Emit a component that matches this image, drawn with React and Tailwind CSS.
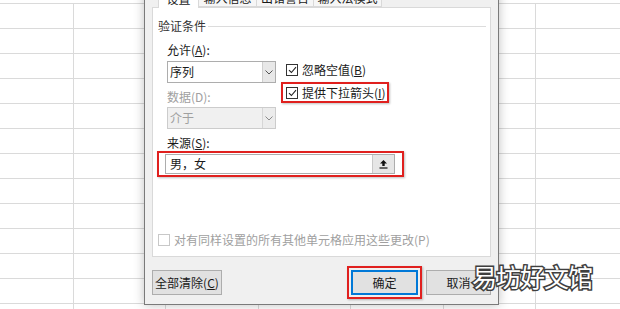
import React from 'react';

const colWidths = [74, 92, 93, 92, 93, 92];
const rows = Array.from({ length: 13 });

function Check({ on = true, disabled = false }) {
  return (
    <span
      className={`flex h-[12px] w-[12px] shrink-0 items-center justify-center border ${
        disabled ? 'border-[#c8c8c8] bg-white' : 'border-[#333] bg-white'
      }`}
    >
      {on && (
        <svg width="9" height="8" viewBox="0 0 9 8">
          <path d="M1 4.2 L3.4 6.5 L8 1.2" fill="none" stroke="#222" strokeWidth="1.1" />
        </svg>
      )}
    </span>
  );
}

function Chevron({ color = '#555' }) {
  return (
    <svg width="8" height="5" viewBox="0 0 8 5">
      <path d="M0.5 0.5 L4 4 L7.5 0.5" fill="none" stroke={color} strokeWidth="1" />
    </svg>
  );
}

function Select({ value, disabled = false }) {
  return (
    <div
      className={`flex h-[22px] w-[109px] items-stretch border ${
        disabled ? 'border-[#cccccc] bg-[#f0f0f0]' : 'border-[#adadad] bg-white'
      }`}
    >
      <span className={`flex-1 pl-[2px] leading-[20px] ${disabled ? 'text-[#a0a0a0]' : 'text-[#1a1a1a]'}`}>
        {value}
      </span>
      <span
        className={`flex w-[13px] items-center justify-center border-l ${
          disabled ? 'border-[#d6d6d6] bg-[#ececec]' : 'border-[#cfcfcf] bg-[#e8e8e8]'
        }`}
      >
        <Chevron color={disabled ? '#8a8a8a' : '#555'} />
      </span>
    </div>
  );
}

export default function App() {
  return (
    <div className="relative h-[309px] w-[620px] overflow-hidden bg-white font-['Microsoft_YaHei','Noto_Sans_CJK_SC',sans-serif] text-[12px] leading-[16px] text-[#1a1a1a]">
      {/* spreadsheet behind */}
      <div className="flex flex-col">
        <div className="h-[4px] border-b border-[#dadada]" />
        {rows.map((_, r) => (
          <div key={r} className="flex h-[25px]">
            {colWidths.map((w, c) => (
              <div key={c} style={{ width: w }} className="shrink-0 border-r border-b border-[#dadada]" />
            ))}
            <div className="flex-1 border-b border-[#dadada]" />
          </div>
        ))}
      </div>

      {/* dialog */}
      <div className="absolute left-[144px] top-[-20px] flex h-[325px] w-[355px] flex-col border border-[#7a7a7a] bg-[#f0f0f0] px-[7px] pt-[7px] shadow-[0_0_10px_rgba(0,0,0,0.25)]">
        {/* tabs */}
        <div className="relative z-10 flex h-[19px] pl-[6px]">
          <div className="-mb-px flex w-[41px] items-center justify-center border border-b-0 border-[#d9d9d9] bg-white pt-[1px]">
            设置
          </div>
          <div className="flex w-[58px] items-center justify-center border border-l-0 border-[#d9d9d9] bg-[#f6f6f6]">
            输入信息
          </div>
          <div className="flex w-[57px] items-center justify-center border border-l-0 border-[#d9d9d9] bg-[#f6f6f6]">
            出错警告
          </div>
          <div className="flex w-[68px] items-center justify-center border border-l-0 border-[#d9d9d9] bg-[#f6f6f6]">
            输入法模式
          </div>
        </div>

        {/* panel */}
        <div className="flex h-[250px] flex-col border border-[#d9d9d9] bg-white">
          <div className="mt-[10px] flex items-center pl-[5px] pr-[4px]">
            <span className="text-[#333]">验证条件</span>
            <span className="ml-[2px] h-px flex-1 bg-[#dcdcdc]" />
          </div>

          <div className="mt-[8px] flex pl-[14px]">
            <div className="flex w-[109px] flex-col">
              <span>
                允许(<u>A</u>):
              </span>
              <div className="mt-[3px]">
                <Select value="序列" />
              </div>
              <span className="mt-[6px] text-[#a0a0a0]">数据(D):</span>
              <div className="mt-[2px]">
                <Select value="介于" disabled />
              </div>
              <span className="mt-[6px]">
                来源(<u>S</u>):
              </span>
            </div>

            <div className="ml-[10px] flex flex-col pt-[20px]">
              <div className="flex items-center gap-[4px]">
                <Check />
                <span>
                  忽略空值(<u>B</u>)
                </span>
              </div>
              <div className="-ml-[5px] mt-[4px] flex h-[21px] w-[108px] items-center gap-[4px] border-2 border-[#e0201e] pl-[3px] shadow-[1px_1px_2px_rgba(0,0,0,0.25)]">
                <Check />
                <span>
                  提供下拉箭头(<u>I</u>)
                </span>
              </div>
            </div>
          </div>

          <div className="ml-[4px] flex h-[26px] w-[247px] border-2 border-[#e0201e] pl-[6px] pt-[1px] shadow-[1px_1px_2px_rgba(0,0,0,0.25)]">
            <div className="flex h-[20px] w-[230px] border border-[#adadad] bg-white">
              <span className="flex-1 pl-[4px] leading-[18px]">男，女</span>
              <span className="flex w-[22px] items-center justify-center border-l border-[#c8c8c8] bg-[#e6e6e6]">
                <svg width="9" height="10" viewBox="0 0 9 10">
                  <path d="M4.5 1 L1 4.6 H3.3 V7 H5.7 V4.6 H8 Z" fill="#111" />
                  <rect x="0.5" y="8.4" width="8" height="1.2" fill="#111" />
                </svg>
              </span>
            </div>
          </div>

          <div className="mt-[55px] flex items-center gap-[4px] pl-[5px] text-[#a0a0a0]">
            <Check on={false} disabled />
            <span>对有同样设置的所有其他单元格应用这些更改(P)</span>
          </div>
        </div>

        {/* buttons */}
        <div className="mt-[13px] flex items-center">
          <button className="h-[25px] w-[70px] border border-[#adadad] bg-[#e1e1e1] text-[12px]">
            全部清除(<u>C</u>)
          </button>
          <div className="ml-auto flex items-center gap-[4px]">
            <div className="-my-[4px] border-2 border-[#e0201e] p-[2px] shadow-[1px_1px_2px_rgba(0,0,0,0.25)]">
              <button className="h-[25px] w-[67px] border-2 border-[#0078d7] bg-[#e1e1e1] text-[12px]">
                确定
              </button>
            </div>
            <button className="h-[25px] w-[65px] border border-[#adadad] bg-[#e1e1e1] text-[12px]">
              取消
            </button>
          </div>
        </div>
      </div>

      {/* watermark */}
      <div className="absolute left-[472px] top-[259px] text-[25px] leading-[34px] tracking-[-1px] text-white [-webkit-text-stroke:3px_#3f3f3f] [paint-order:stroke_fill]">
        易坊好文馆
      </div>
    </div>
  );
}
